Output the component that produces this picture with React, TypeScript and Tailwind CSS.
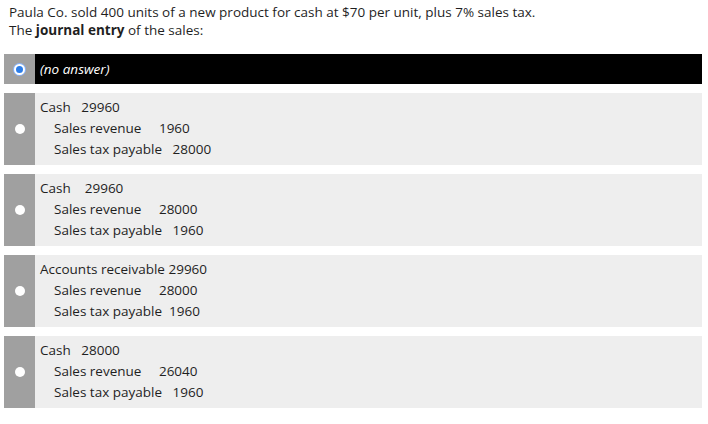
const options = [
  { first: 'Cash   29960', rev: 'Sales revenue     1960', tax: 'Sales tax payable   28000' },
  { first: 'Cash    29960', rev: 'Sales revenue     28000', tax: 'Sales tax payable   1960' },
  { first: 'Accounts receivable 29960', rev: 'Sales revenue     28000', tax: 'Sales tax payable  1960' },
  { first: 'Cash   28000', rev: 'Sales revenue     26040', tax: 'Sales tax payable   1960' },
]

export default function App() {
  return (
    <div className="w-[708px] h-[424px] bg-white text-[13.5px] text-[#1f1f1f] font-['Open_Sans',sans-serif]">
      <div className="pl-[9px] pt-[3px] leading-[18px]">
        <p>Paula Co. sold 400 units of a new product for cash at $70 per unit, plus 7% sales tax.</p>
        <p>
          The <span className="font-bold">journal entry</span> of the sales:
        </p>
      </div>

      <div className="flex flex-col gap-[9px] pl-[4px] pr-[6px] mt-[15px]">
        <div className="flex h-[30px] bg-black">
          <div className="w-[31px] bg-[#a0a0a0] flex items-center justify-center">
            <span className="w-[11px] h-[11px] rounded-full bg-[#2b7de9] border-[2px] border-white ring-1 ring-[#8ab4f8]" />
          </div>
          <div className="pl-[5px] flex items-center text-white italic">(no answer)</div>
        </div>

        {options.map((o, i) => (
          <div key={i} className="flex h-[72px] bg-[#eeeeee]">
            <div className="w-[31px] bg-[#a0a0a0] flex items-center justify-center">
              <span className="w-[10px] h-[10px] rounded-full bg-white" />
            </div>
            <div className="pl-[5px] pt-[4px] leading-[21px] whitespace-pre">
              <div>{o.first}</div>
              <div className="pl-[14px]">{o.rev}</div>
              <div className="pl-[14px]">{o.tax}</div>
            </div>
          </div>
        ))}
      </div>
    </div>
  )
}
